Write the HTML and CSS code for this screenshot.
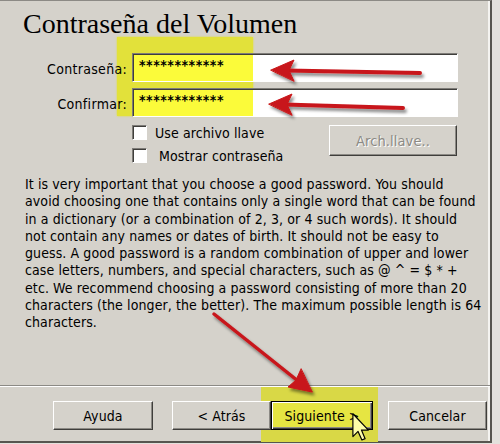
FILE: index.html
```html
<!DOCTYPE html>
<html>
<head>
  <title>Contraseña del Volumen</title>
  <meta charset="utf-8">
  <link rel="stylesheet" href="styles.css">
</head>
<body>
  <div class="dialog">
    <div class="marker marker-fields"></div>
    <div class="marker marker-next"></div>

    <h1 class="title">Contraseña del Volumen</h1>

    <div class="fields">
      <label class="field-label">Contraseña:</label>
      <div class="field">************</div>
      <label class="field-label">Confirmar:</label>
      <div class="field">************</div>
    </div>

    <div class="options">
      <div class="checks">
        <div class="check"><span class="box"></span><span>Use archivo llave</span></div>
        <div class="check check-wide"><span class="box"></span><span>Mostrar contraseña</span></div>
      </div>
      <button class="btn btn-disabled" disabled>Arch.llave..</button>
    </div>

    <p class="info">It is very important that you choose a good password. You should<br>
      avoid choosing one that contains only a single word that can be found<br>
      in a dictionary (or a combination of 2, 3, or 4 such words). It should<br>
      not contain any names or dates of birth. It should not be easy to<br>
      guess. A good password is a random combination of upper and lower<br>
      case letters, numbers, and special characters, such as @ ^ = $ * +<br>
      etc. We recommend choosing a password consisting of more than 20<br>
      characters (the longer, the better). The maximum possible length is 64<br>
      characters.</p>

    <div class="footer">
      <button class="btn btn-help">Ayuda</button>
      <button class="btn">&lt; Atrás</button>
      <button class="btn btn-next">Siguiente &gt;</button>
      <button class="btn btn-cancel">Cancelar</button>
    </div>

    <svg class="arrows" width="500" height="444" viewBox="0 0 500 444">
      <defs>
        <filter id="shadow" x="-20%" y="-20%" width="140%" height="140%">
          <feDropShadow dx="2" dy="3" stdDeviation="1.6" flood-color="#000" flood-opacity="0.45"/>
        </filter>
      </defs>
      <g filter="url(#shadow)" fill="#c8161a" stroke="#c8161a" stroke-linecap="round">
        <line x1="420" y1="73" x2="286" y2="70.5" stroke-width="4"/>
        <polygon points="271,70 294,60 289,70.5 294,81" stroke-width="1"/>
        <line x1="403" y1="108" x2="284" y2="104.5" stroke-width="4"/>
        <polygon points="269,104 292,94 287,104.5 292,115" stroke-width="1"/>
        <line x1="214" y1="314" x2="298" y2="381" stroke-width="3.5"/>
        <polygon points="312,392 288,387 296,380 301,369" stroke-width="1"/>
      </g>
    </svg>

    <svg class="cursor" width="18" height="28" viewBox="0 0 12 19">
      <path d="M0.5 0.5 L0.5 16 L4 12.5 L6.6 18.3 L8.8 17.4 L6.3 11.6 L11 11.6 Z" fill="#fdfca8" stroke="#000" stroke-width="0.8" stroke-linejoin="round"/>
    </svg>
  </div>
</body>
</html>
```

FILE: styles.css
```css
body {
  margin: 0;
  background: #e3e1dc;
}

.dialog {
  position: relative;
  z-index: 0;
  width: 490px;
  height: 440px;
  display: flex;
  flex-direction: column;
  background: #d5d2cb;
  border-top: 1px solid #8c8a85;
  border-right: 2px solid #57554f;
  border-bottom: 2px solid #57554f;
  box-shadow: inset -2px 0 0 #f4f3f0;
  font-family: "DejaVu Sans Condensed", "DejaVu Sans", sans-serif;
  font-size: 14px;
  letter-spacing: 0.1px;
  color: #000;
}

.marker {
  position: absolute;
  z-index: -1;
  background: #e2e13a;
  box-shadow: 0 0 2px #e2e13a;
}

.marker-fields {
  left: 117px;
  top: 36px;
  width: 136px;
  height: 79px;
}

.marker-next {
  left: 261px;
  top: 386px;
  width: 117px;
  height: 55px;
  background: #d9d846;
  box-shadow: none;
}

.title {
  margin: 0;
  padding: 7px 0 0 23px;
  font: normal 28px/32px "Liberation Serif", serif;
  letter-spacing: 0;
}

.fields {
  display: grid;
  grid-template-columns: 127px 326px;
  column-gap: 5px;
  row-gap: 6px;
  margin-top: 13px;
}

.field-label {
  align-self: center;
  text-align: right;
  padding-top: 3px;
  letter-spacing: 0.3px;
}

.field {
  box-sizing: border-box;
  height: 29px;
  padding: 3px 0 0 6px;
  border: 1px solid;
  border-color: #7e7c78 #fff #fff #7e7c78;
  box-shadow: inset 1px 1px 0 #3f3e3b;
  background: linear-gradient(90deg, #fbfb3a 120px, #fff 120px);
  font-weight: bold;
  letter-spacing: 0.5px;
}

.options {
  display: flex;
  margin-top: 8px;
  padding-left: 132px;
}

.checks {
  display: flex;
  flex-direction: column;
  gap: 8px;
  width: 197px;
}

.check {
  display: flex;
  align-items: center;
  gap: 8px;
  height: 15px;
}

.check-wide {
  gap: 12px;
}

.box {
  box-sizing: border-box;
  width: 15px;
  height: 15px;
  background: #fff;
  border: 1px solid;
  border-color: #7e7c78 #fff #fff #7e7c78;
  box-shadow: inset 1px 1px 0 #3f3e3b;
}

.btn {
  box-sizing: border-box;
  width: 99px;
  height: 29px;
  padding: 0;
  background: #d5d2cb;
  border: 1px solid;
  border-color: #fff #3f3e3b #3f3e3b #fff;
  box-shadow: inset -1px -1px 0 #8c8a85;
  font: inherit;
  letter-spacing: inherit;
  color: #000;
}

.btn-disabled {
  width: 128px;
  height: 31px;
  color: #8c8a85;
  text-shadow: 1px 1px 0 #fff;
  font-size: 14.5px;
}

.info {
  width: 470px;
  margin: 13px 0 0 25px;
  line-height: 17.25px;
}

.footer {
  display: flex;
  margin-top: auto;
  height: 56px;
  box-sizing: border-box;
  padding: 15px 0 0 53px;
  border-top: 1px solid #8c8a85;
  box-shadow: inset 0 1px 0 #fff;
}

.btn-help {
  width: 100px;
  margin-right: 19px;
}

.btn-next {
  width: 102px;
  background: #e6e542;
  border: 1px solid #000;
  box-shadow: inset 1px 1px 0 #fff, inset -1px -1px 0 #3f3e3b, inset -2px -2px 0 #8c8a85;
}

.btn-cancel {
  margin-left: 15px;
}

.arrows {
  position: absolute;
  left: 0;
  top: -1px;
  pointer-events: none;
}

.cursor {
  position: absolute;
  left: 352px;
  top: 412px;
  pointer-events: none;
}
```
